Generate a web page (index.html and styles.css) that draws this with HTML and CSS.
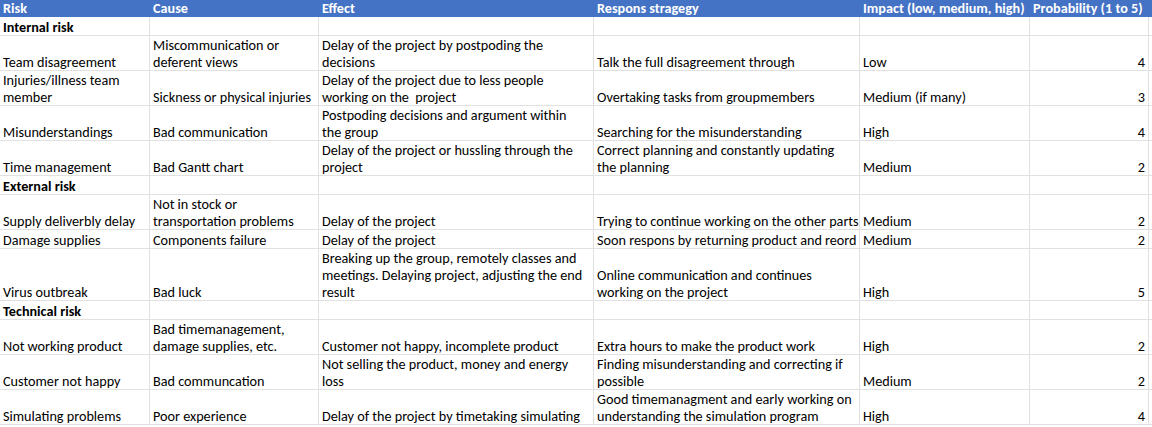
FILE: index.html
```html
<!DOCTYPE html>
<html lang="en">
<head>
<meta charset="utf-8">
<title>Risk analysis</title>
<link rel="stylesheet" href="styles.css">
</head>
<body>
<div class="sheet">
  <div class="row head">
    <div class="c">Risk</div><div class="c">Cause</div><div class="c">Effect</div><div class="c">Respons stragegy</div><div class="c">Impact (low, medium, high)</div><div class="c">Probability (1 to 5)</div><div class="c"></div>
  </div>
  <div class="row h1">
    <div class="c b">Internal risk</div><div class="c"></div><div class="c"></div><div class="c"></div><div class="c"></div><div class="c"></div><div class="c"></div>
  </div>
  <div class="row h2">
    <div class="c">Team disagreement</div><div class="c">Miscommunication or<br>deferent views</div><div class="c">Delay of the project by postpoding the<br>decisions</div><div class="c">Talk the full disagreement through</div><div class="c">Low</div><div class="c n">4</div><div class="c"></div>
  </div>
  <div class="row h2">
    <div class="c">Injuries/illness team<br>member</div><div class="c">Sickness or physical injuries</div><div class="c">Delay of the project due to less people<br>working on the&nbsp; project</div><div class="c">Overtaking tasks from groupmembers</div><div class="c">Medium (if many)</div><div class="c n">3</div><div class="c"></div>
  </div>
  <div class="row h2">
    <div class="c">Misunderstandings</div><div class="c">Bad communication</div><div class="c">Postpoding decisions and argument within<br>the group</div><div class="c">Searching for the misunderstanding</div><div class="c">High</div><div class="c n">4</div><div class="c"></div>
  </div>
  <div class="row h2">
    <div class="c">Time management</div><div class="c">Bad Gantt chart</div><div class="c">Delay of the project or hussling through the<br>project</div><div class="c">Correct planning and constantly updating<br>the planning</div><div class="c">Medium</div><div class="c n">2</div><div class="c"></div>
  </div>
  <div class="row h1">
    <div class="c b">External risk</div><div class="c"></div><div class="c"></div><div class="c"></div><div class="c"></div><div class="c"></div><div class="c"></div>
  </div>
  <div class="row h2">
    <div class="c">Supply deliverbly delay</div><div class="c">Not in stock or<br>transportation problems</div><div class="c">Delay of the project</div><div class="c">Trying to continue working on the other parts</div><div class="c">Medium</div><div class="c n">2</div><div class="c"></div>
  </div>
  <div class="row h1">
    <div class="c">Damage supplies</div><div class="c">Components failure</div><div class="c">Delay of the project</div><div class="c">Soon respons by returning product and reord</div><div class="c">Medium</div><div class="c n">2</div><div class="c"></div>
  </div>
  <div class="row h3">
    <div class="c">Virus outbreak</div><div class="c">Bad luck</div><div class="c">Breaking up the group, remotely classes and<br>meetings. Delaying project, adjusting the end<br>result</div><div class="c">Online communication and continues<br>working on the project</div><div class="c">High</div><div class="c n">5</div><div class="c"></div>
  </div>
  <div class="row h1">
    <div class="c b">Technical risk</div><div class="c"></div><div class="c"></div><div class="c"></div><div class="c"></div><div class="c"></div><div class="c"></div>
  </div>
  <div class="row h2">
    <div class="c">Not working product</div><div class="c">Bad timemanagement,<br>damage supplies, etc.</div><div class="c">Customer not happy, incomplete product</div><div class="c">Extra hours to make the product work</div><div class="c">High</div><div class="c n">2</div><div class="c"></div>
  </div>
  <div class="row h2">
    <div class="c">Customer not happy</div><div class="c">Bad communcation</div><div class="c">Not selling the product, money and energy<br>loss</div><div class="c">Finding misunderstanding and correcting if<br>possible</div><div class="c">Medium</div><div class="c n">2</div><div class="c"></div>
  </div>
  <div class="row h2">
    <div class="c">Simulating problems</div><div class="c">Poor experience</div><div class="c">Delay of the project by timetaking simulating</div><div class="c">Good timemanagment and early working on<br>understanding the simulation program</div><div class="c">High</div><div class="c n">4</div><div class="c"></div>
  </div>
</div>
</body>
</html>
```

FILE: styles.css
```css
html, body {
  margin: 0;
  padding: 0;
  background: #fff;
}
body {
  font-family: Carlito, Lato, "Liberation Sans", sans-serif;
  font-size: 14.2px;
  line-height: 17px;
  color: #000;
  overflow: hidden;
}
.sheet {
  width: 1152px;
}
.row {
  display: grid;
  grid-template-columns: 150px 169px 275px 266px 170px 119px 1fr;
}
.head { height: 17px; background: #4472c4; color: #fff; font-weight: bold; }
.h1 { height: 19px; }
.h2 { height: 35px; }
.h3 { height: 52px; }
.c {
  box-sizing: border-box;
  display: flex;
  flex-direction: column;
  justify-content: flex-end;
  padding: 0 4px 0 3px;
  box-shadow: inset -1px -1px 0 #e1e1e1;
  white-space: nowrap;
  overflow-x: clip;
  overflow-y: visible;
  min-width: 0;
}
.head .c {
  box-shadow: none;
}
.b { font-weight: bold; }
.n { text-align: right; align-items: flex-end; }
```
